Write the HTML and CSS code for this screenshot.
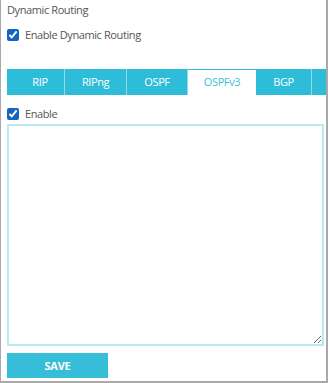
FILE: index.html
```html
<!DOCTYPE html>
<html>
<head>
<meta charset="utf-8">
<link rel="stylesheet" href="styles.css">
</head>
<body>
<div class="frame">
  <div class="title">Dynamic Routing</div>
  <label class="check-row top-check">
    <input type="checkbox" checked>
    <span>Enable Dynamic Routing</span>
  </label>
  <ul class="tabs">
    <li class="tab t-rip">RIP</li>
    <li class="tab t-ripng">RIPng</li>
    <li class="tab t-ospf">OSPF</li>
    <li class="tab t-ospfv3 active">OSPFv3</li>
    <li class="tab t-bgp">BGP</li>
    <li class="tab t-more"></li>
  </ul>
  <label class="check-row enable-check">
    <input type="checkbox" checked>
    <span>Enable</span>
  </label>
  <textarea class="config"></textarea>
  <button class="save">SAVE</button>
</div>
</body>
</html>
```
FILE: styles.css
```css
html, body {
  margin: 0;
  padding: 0;
  background: #fff;
}
.frame {
  box-sizing: border-box;
  width: 328px;
  height: 383px;
  border-left: 1px solid #a9a9a9;
  border-right: 2px solid #a9a9a9;
  border-bottom: 2px solid #a9a9a9;
  padding: 2px 0 0 6px;
  overflow: hidden;
  font-family: "Open Sans", "DejaVu Sans", sans-serif;
  font-size: 11px;
  letter-spacing: -0.4px;
  color: #555;
  display: flex;
  flex-direction: column;
}
.title {
  line-height: 16px;
  height: 16px;
}
.check-row {
  display: flex;
  align-items: center;
  gap: 6px;
  line-height: 16px;
}
.check-row input {
  margin: 0;
  width: 12px;
  height: 12px;
  accent-color: #1565c0;
}
.top-check {
  margin-top: 9px;
}
.tabs {
  list-style: none;
  margin: 26px 0 0 0;
  padding: 0;
  display: flex;
  height: 26px;
  background: #2dbdd8;
  width: 340px;
  flex: none;
}
.tab {
  box-sizing: border-box;
  flex: none;
  height: 26px;
  line-height: 25px;
  text-align: center;
  color: #fff;
  border-right: 1px solid #8fdbe9;
}
.t-rip { width: 58px; padding-left: 9px; }
.t-ripng { width: 62px; }
.t-ospf { width: 61px; }
.t-ospfv3 { width: 68px; }
.t-bgp { width: 56px; }
.t-more { width: 40px; border-right: none; }
.tab.active {
  background: #fff;
  color: #3fc0d9;
  border-top: 1px solid #2dbdd8;
  border-right: none;
  line-height: 23px;
}
.enable-check {
  margin-top: 11px;
}
.config {
  box-sizing: border-box;
  margin: 2px 0 0 0;
  width: 317px;
  height: 222px;
  border: 2px solid #b9e9f1;
  border-radius: 0;
  padding: 4px;
  flex: none;
  outline: none;
  font-family: inherit;
}
.save {
  margin-top: 7px;
  width: 101px;
  height: 25px;
  border: none;
  background: #36bdd7;
  color: #fff;
  font-family: "Open Sans", "DejaVu Sans", sans-serif;
  font-weight: 700;
  font-size: 11px;
  letter-spacing: -0.2px;
  padding: 0;
  flex: none;
}
```
